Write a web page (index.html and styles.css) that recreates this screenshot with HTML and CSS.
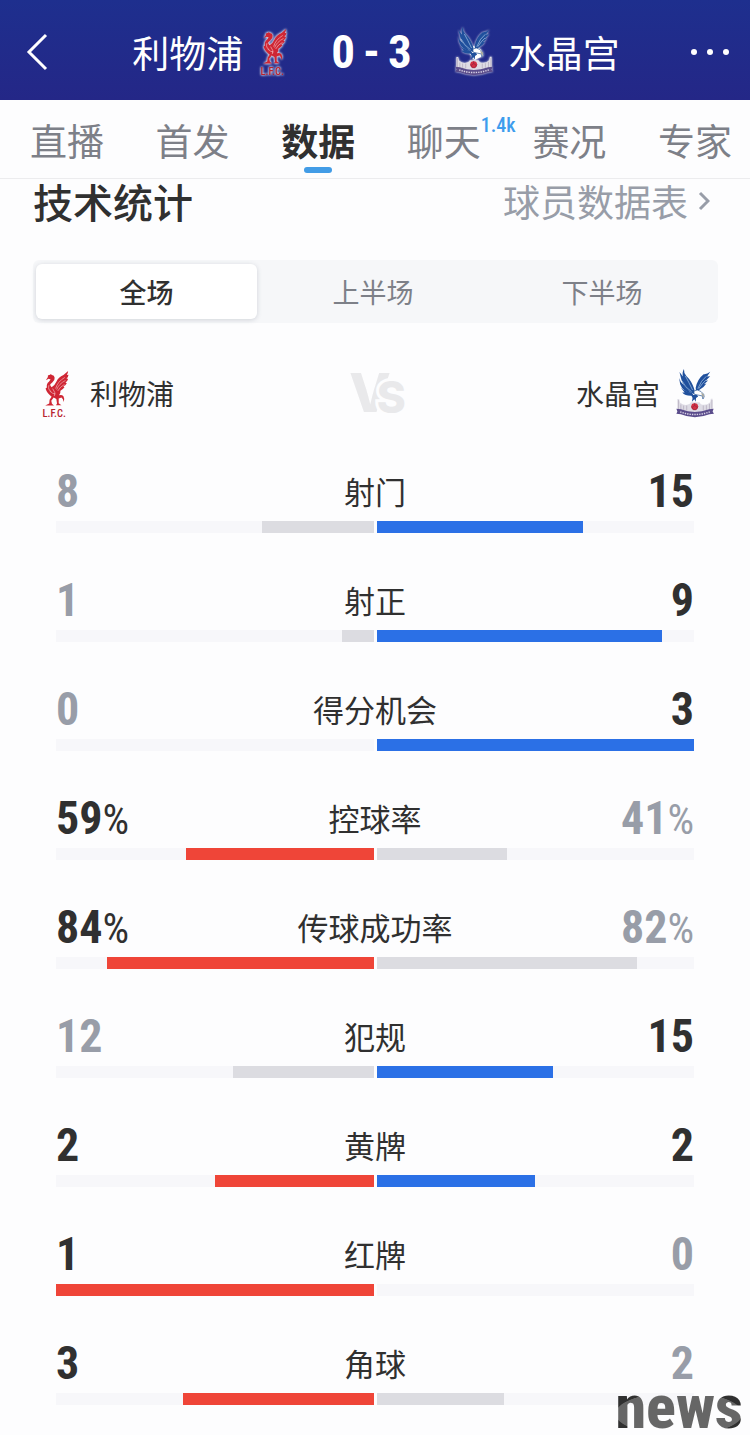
FILE: index.html
```html
<!DOCTYPE html>
<html lang="zh-CN">
<head>
	<meta charset="UTF-8">
	<meta name="viewport" content="width=device-width, initial-scale=1">
	<title>利物浦 0 - 3 水晶宫</title>
	<link rel="stylesheet" href="styles.css">
</head>
<body>
	<svg class="sprite" aria-hidden="true">
		<symbol id="liverpool" viewBox="0 0 85 145">
			<g class="bird">
				<path d="M14 33 L20 24 Q18 17 25 18 Q28 13 32 18 Q39 18 40 26 Q41 34 33 40 L27 45 Q26 50 31 54 Q41 48 45 38 Q51 24 66 18 L80 6 Q79 14 76 18 L81 17 Q80 25 75 29 L80 29 Q78 37 72 40 L76 42 Q72 49 66 51 L69 54 Q64 61 57 64 Q58 73 53 78 Q61 75 66 81 Q71 89 66 98 Q66 88 60 84 L52 87 L52 101 L60 107 L44 107 L47 102 L45 89 L37 84 L30 94 L32 103 L38 108 L12 108 L24 102 L25 91 L31 82 Q17 72 13 58 L17 55 Q15 44 23 38 L28 31 L22 29 Z"/>
			</g>
			<g class="feathers">
				<path d="M43 58 Q48 38 70 25 M46 61 Q52 44 72 34 M49 65 Q57 51 69 46 M23 48 Q19 61 30 67 M34 58 Q44 70 39 80 M25 65 Q34 74 43 74"/>
			</g>
			<text class="lfc" x="4" y="141">L.F.C.</text>
		</symbol>
		<symbol id="palace" viewBox="0 0 110 142">
			<path class="body" d="M38 56 L60 56 L76 66 L82 84 L64 92 L56 96 L46 82 L34 70 Z"/>
			<g class="wing">
				<path d="M23 0 Q22 11 30 20 Q45 34 52 56 Q56 66 54 73 L42 68 Q24 56 16 32 Q12 18 10 9 L20 22 Q17 9 23 0 Z"/>
				<path d="M9 26 Q12 38 22 46 L36 62 L44 70 Q20 66 12 44 Z"/>
				<path d="M14 54 Q28 66 46 69 L51 77 Q28 80 18 68 L25 68 Z"/>
				<path d="M99 8 Q90 16 80 15 Q62 29 57 54 L58 66 L67 61 Q80 55 88 42 L81 44 L93 33 L86 34 L99 21 L90 22 Z"/>
				<path d="M44 76 L60 74 L64 80 L58 84 L57 95 L53 88 L46 95 L48 84 Z"/>
			</g>
			<path class="wing-lines" d="M27 20 Q37 38 48 61 M17 34 Q26 53 45 66 M88 21 Q73 32 63 57 M87 32 Q76 41 66 57"/>
			<path class="head" d="M52 64 Q61 57 72 65 L80 73 Q84 81 78 87 L76 78 L66 76 Q57 75 52 72 Z"/>
			<path class="beak" d="M73 68 L81 74 L80 84 L75 76 Z"/>
			<path class="stand" d="M4 87 L9 87 L12 98 Q27 109 40 101 L43 96 L68 96 L72 102 Q88 107 99 96 L101 86 L106 86 L106 125 L4 125 Z"/>
			<path class="palace-lines" d="M7 90 V120 M14 103 V120 M22 106 V120 M31 106 V120 M79 106 V120 M88 105 V120 M97 101 V120 M104 90 V120"/>
			<circle class="ball" cx="54" cy="109" r="10"/>
			<path class="ball-lines" d="M54 99 V106 L47 111 L50 118 H58 L62 111 L54 106 M47 111 L44 109 M62 111 L64 109"/>
			<path class="ribbon" d="M1 115 L14 117 Q54 132 96 117 L109 115 L106 123 L110 130 L97 131 Q54 148 14 131 L1 130 L4 123 Z"/>
			<path class="ribbon-lines" d="M12 124 Q54 140 98 124"/>
		</symbol>
	</svg>

	<header class="top-bar">
		<button type="button" class="icon-button back" aria-label="返回">
			<svg width="22" height="38" viewBox="0 0 22 38"><path d="M20 2 L3 19 L20 36"/></svg>
		</button>
		<div class="match">
			<div class="team">
				<span>利物浦</span>
				<svg class="crest crest-liverpool outlined" aria-hidden="true"><use href="#liverpool"/></svg>
			</div>
			<strong class="score"><span>0</span><span>-</span><span>3</span></strong>
			<div class="team">
				<svg class="crest crest-palace outlined" aria-hidden="true"><use href="#palace"/></svg>
				<span>水晶宫</span>
			</div>
		</div>
		<button type="button" class="icon-button more" aria-label="更多">
			<svg width="40" height="8" viewBox="0 0 40 8"><circle cx="4" cy="4" r="3"/><circle cx="20" cy="4" r="3"/><circle cx="36" cy="4" r="3"/></svg>
		</button>
	</header>

	<nav class="tabs">
		<a href="#live">直播</a>
		<a href="#lineup">首发</a>
		<a href="#stats" class="active" aria-current="page">数据</a>
		<a href="#chat">聊天<span class="badge">1.4k</span></a>
		<a href="#events">赛况</a>
		<a href="#experts">专家</a>
	</nav>

	<main class="content" id="stats">
		<div class="section-head">
			<h1>技术统计</h1>
			<a href="#players" class="players-link">球员数据表
				<svg width="12" height="22" viewBox="0 0 12 22" aria-hidden="true"><path d="M2 3 L10 11 L2 19"/></svg>
			</a>
		</div>

		<div class="periods">
			<button type="button" class="active" aria-pressed="true">全场</button>
			<button type="button" aria-pressed="false">上半场</button>
			<button type="button" aria-pressed="false">下半场</button>
		</div>

		<div class="versus">
			<div class="side">
				<svg class="crest crest-liverpool" aria-hidden="true"><use href="#liverpool"/></svg>
				<span>利物浦</span>
			</div>
			<div class="vs"><span class="v">V</span><span class="s">S</span></div>
			<div class="side away">
				<span>水晶宫</span>
				<svg class="crest crest-palace" aria-hidden="true"><use href="#palace"/></svg>
			</div>
		</div>

		<ul class="stats">
			<li>
				<div class="values"><span class="num">8</span><span class="label">射门</span><span class="num win">15</span></div>
				<div class="bars"><div class="track"><div class="fill" style="width: 35%"></div></div><div class="track"><div class="fill blue" style="width: 65%"></div></div></div>
			</li>
			<li>
				<div class="values"><span class="num">1</span><span class="label">射正</span><span class="num win">9</span></div>
				<div class="bars"><div class="track"><div class="fill" style="width: 10%"></div></div><div class="track"><div class="fill blue" style="width: 90%"></div></div></div>
			</li>
			<li>
				<div class="values"><span class="num">0</span><span class="label">得分机会</span><span class="num win">3</span></div>
				<div class="bars"><div class="track"></div><div class="track"><div class="fill blue" style="width: 100%"></div></div></div>
			</li>
			<li>
				<div class="values"><span class="num win">59<span class="pct">%</span></span><span class="label">控球率</span><span class="num">41<span class="pct">%</span></span></div>
				<div class="bars"><div class="track"><div class="fill red" style="width: 59%"></div></div><div class="track"><div class="fill" style="width: 41%"></div></div></div>
			</li>
			<li>
				<div class="values"><span class="num win">84<span class="pct">%</span></span><span class="label">传球成功率</span><span class="num">82<span class="pct">%</span></span></div>
				<div class="bars"><div class="track"><div class="fill red" style="width: 84%"></div></div><div class="track"><div class="fill" style="width: 82%"></div></div></div>
			</li>
			<li>
				<div class="values"><span class="num">12</span><span class="label">犯规</span><span class="num win">15</span></div>
				<div class="bars"><div class="track"><div class="fill" style="width: 44.4%"></div></div><div class="track"><div class="fill blue" style="width: 55.6%"></div></div></div>
			</li>
			<li>
				<div class="values"><span class="num win">2</span><span class="label">黄牌</span><span class="num win">2</span></div>
				<div class="bars"><div class="track"><div class="fill red" style="width: 50%"></div></div><div class="track"><div class="fill blue" style="width: 50%"></div></div></div>
			</li>
			<li>
				<div class="values"><span class="num win">1</span><span class="label">红牌</span><span class="num">0</span></div>
				<div class="bars"><div class="track"><div class="fill red" style="width: 100%"></div></div><div class="track"></div></div>
			</li>
			<li>
				<div class="values"><span class="num win">3</span><span class="label">角球</span><span class="num">2</span></div>
				<div class="bars"><div class="track"><div class="fill red" style="width: 60%"></div></div><div class="track"><div class="fill" style="width: 40%"></div></div></div>
			</li>
		</ul>
	</main>

	<div class="watermark">news</div>
</body>
</html>
```
FILE: styles.css
```css
* {
	box-sizing: border-box;
}

body {
	margin: 0;
	background: #fdfdfe;
	color: #303030;
	font-family: "Noto Sans CJK SC", sans-serif;
}

a {
	color: inherit;
	text-decoration: none;
}

button {
	margin: 0;
	padding: 0;
	border: none;
	background: none;
	color: inherit;
	font: inherit;
	cursor: pointer;
}

svg {
	display: block;
	flex: none;
}

.sprite {
	display: none;
}

/* header */
.top-bar {
	display: grid;
	grid-template-columns: 1fr auto 1fr;
	align-items: center;
	height: 100px;
	padding: 3px 20px 0 26px;
	background: linear-gradient(#1e2f8e, #242787);
	color: #fff;
}

.icon-button {
	display: flex;
	align-items: center;
	height: 48px;
}

.back path {
	fill: none;
	stroke: #fff;
	stroke-width: 3;
}

.more {
	justify-self: end;
}

.more circle {
	fill: #fff;
}

.match {
	display: flex;
	align-items: center;
	gap: 43px;
	margin-right: 4px;
}

.team {
	display: flex;
	align-items: center;
	gap: 16px;
	font-size: 37px;
	line-height: 48px;
}

.score {
	display: flex;
	gap: 8px;
	font-family: "Roboto Condensed", "Liberation Sans Narrow", sans-serif;
	font-size: 47px;
	line-height: 48px;
}

/* tabs */
.tabs {
	display: flex;
	justify-content: space-between;
	height: 79px;
	padding: 14px 18px 0 30px;
	border-bottom: 1px solid #ececee;
	color: #7d8088;
	font-size: 37px;
	line-height: 52px;
}

.tabs a {
	position: relative;
}

.tabs .active {
	color: #303030;
	font-weight: 700;
}

.tabs .active::after {
	content: "";
	position: absolute;
	left: 50%;
	bottom: 5px;
	width: 28px;
	height: 6px;
	margin-left: -14px;
	border-radius: 3px;
	background: #429ce6;
}

.badge {
	position: absolute;
	left: 100%;
	top: 0;
	color: #3d9ced;
	font: 500 20px/22px "Roboto Condensed", "Liberation Sans Narrow", sans-serif;
}

/* statistics */
.content {
	padding: 0 32px 28px 33px;
}

.section-head {
	display: flex;
	justify-content: space-between;
	height: 48px;
	margin-bottom: 33px;
	line-height: 44px;
}

.section-head h1 {
	margin: 0;
	font-size: 40px;
	font-weight: 500;
}

.players-link {
	display: flex;
	align-items: center;
	gap: 10px;
	height: 44px;
	padding-right: 8px;
	color: #989da8;
	font-size: 37px;
}

.players-link path {
	fill: none;
	stroke: #989da8;
	stroke-width: 3;
}

.periods {
	display: grid;
	grid-template-columns: 221fr 226fr 226fr;
	column-gap: 3px;
	height: 63px;
	padding: 4px 3px;
	border-radius: 6px;
	background: #f6f7f9;
	color: #7d8088;
	font-size: 27px;
}

.periods .active {
	border-radius: 6px;
	background: #fff;
	box-shadow: 0 1px 5px rgba(60, 70, 90, 0.2);
	color: #303030;
	font-weight: 500;
}

.versus {
	display: grid;
	grid-template-columns: 1fr auto 1fr;
	align-items: center;
	height: 48px;
	margin-top: 44px;
	padding: 0 4px 0 8px;
	font-size: 28px;
	line-height: 40px;
}

.side {
	display: flex;
	align-items: center;
	gap: 20px;
}

.away {
	justify-content: flex-end;
	gap: 16px;
}

.vs {
	display: flex;
	align-items: center;
	color: #e9e9eb;
	font: 800 54px/44px Inter, sans-serif;
}

.vs .s {
	margin: 8px 0 0 -14px;
	font-size: 44px;
	-webkit-text-stroke: 6px #fdfdfe;
	paint-order: stroke fill;
}

.stats {
	display: flex;
	flex-direction: column;
	gap: 43px;
	margin: 52px 0 0;
	padding: 0 24px 0 23px;
	list-style: none;
}

.values {
	display: grid;
	grid-template-columns: 1fr auto 1fr;
	height: 48px;
	margin-bottom: 6px;
	line-height: 48px;
}

.label {
	font-size: 31px;
}

.num {
	color: #989da8;
	font-family: "Roboto Condensed", "Liberation Sans Narrow", sans-serif;
	font-size: 46px;
	font-weight: 700;
}

.num:last-child {
	text-align: right;
}

.num.win {
	color: #303030;
}

.pct {
	font-size: 42px;
	font-weight: 400;
}

.bars {
	display: grid;
	grid-template-columns: 1fr 1fr;
	gap: 3px;
}

.track {
	display: flex;
	height: 12px;
	background: #f7f7fa;
}

.track:first-child {
	justify-content: flex-end;
}

.fill {
	background: #dcdce1;
}

.fill.red {
	background: #ef4538;
}

.fill.blue {
	background: #2b70e6;
}

/* crests */
.crest-liverpool {
	width: 29px;
	height: 49px;
}

.crest-palace {
	width: 38px;
	height: 49px;
}

.outlined {
	filter: drop-shadow(0 0 1px rgba(255, 255, 255, 0.9));
}

.outlined.crest-liverpool {
	filter: drop-shadow(0 0 1px #fff) drop-shadow(0 0 1px rgba(255, 255, 255, 0.6));
}

.bird {
	fill: #cf2634;
}

.feathers {
	fill: none;
	stroke: #f3b6b9;
	stroke-width: 2;
}

.lfc {
	fill: #b8232f;
	font: 500 31px "Roboto Condensed", "Liberation Sans Narrow", sans-serif;
}

.body,
.head {
	fill: #fff;
}

.head {
	stroke: #285596;
	stroke-width: 2;
}

.wing {
	fill: #20509d;
}

.wing-lines {
	fill: none;
	stroke: #a9c6e6;
	stroke-width: 2;
}

.beak {
	fill: #aaa99d;
}

.stand {
	fill: #dedce5;
}

.palace-lines {
	stroke: #b0a8b9;
	stroke-width: 2;
}

.ball {
	fill: #d52f42;
}

.ball-lines {
	fill: none;
	stroke: #8e2745;
	stroke-width: 2;
}

.ribbon {
	fill: #5b4d8c;
}

.ribbon-lines {
	fill: none;
	stroke: #d8d2e5;
	stroke-width: 4;
	stroke-dasharray: 4 3;
}

.watermark {
	position: absolute;
	right: 7px;
	bottom: 2px;
	padding-bottom: 6px;
	overflow: hidden;
	background: radial-gradient(ellipse 64px 22px at 50% 58%, #666 98%, #303030 100%);
	background-clip: text;
	-webkit-background-clip: text;
	color: transparent;
	font: 800 62px/40px "Roboto Condensed", "Liberation Sans Narrow", sans-serif;
}
```
